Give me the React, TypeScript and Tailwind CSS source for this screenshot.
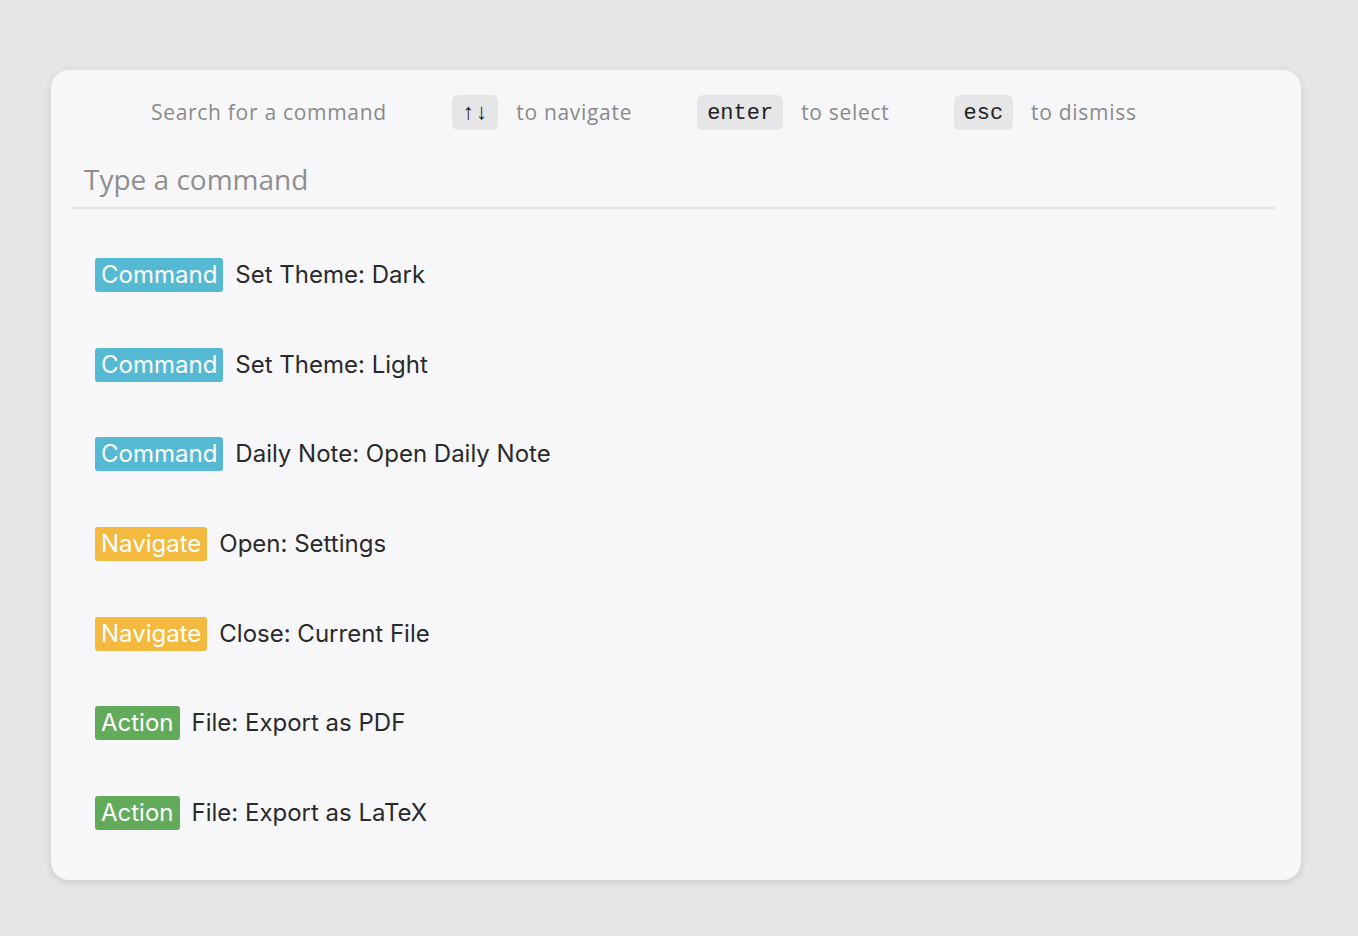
import React from "react";

type Kind = "Command" | "Navigate" | "Action";

const items: { kind: Kind; label: string }[] = [
  { kind: "Command", label: "Set Theme: Dark" },
  { kind: "Command", label: "Set Theme: Light" },
  { kind: "Command", label: "Daily Note: Open Daily Note" },
  { kind: "Navigate", label: "Open: Settings" },
  { kind: "Navigate", label: "Close: Current File" },
  { kind: "Action", label: "File: Export as PDF" },
  { kind: "Action", label: "File: Export as LaTeX" },
];

const badgeClass: Record<Kind, string> = {
  Command: "bg-[#56b9d3]",
  Navigate: "bg-[#f4b93f]",
  Action: "bg-[#62ab5b]",
};

const Kbd = ({ children }: { children: React.ReactNode }) => (
  <span className="inline-flex h-[35px] items-center rounded-md bg-[#e6e6e8] px-[10px] pt-[2px] text-[22px] tracking-normal text-[#222] [font-family:'Liberation_Mono',monospace]">
    {children}
  </span>
);

const App = () => {
  return (
    <div className="min-h-[936px] w-full bg-[#e5e5e5] pt-[70px] pl-[51px]">
      <div className="h-[810px] w-[1250px] rounded-[18px] bg-[#f7f7f9] shadow-[0_2px_6px_rgba(0,0,0,0.12)] pt-[24px] pl-[20px] pr-[26px]">
        <div className="flex h-[35px] items-center pl-[80px] pt-[2px] text-[21px] tracking-[0.7px] text-[#8a8a8a] [font-family:'Open_Sans',sans-serif]">
          <span>Search for a command</span>
          <span className="ml-[65px] flex items-center gap-[18px]">
            <Kbd>↑↓</Kbd>
            <span>to navigate</span>
          </span>
          <span className="ml-[65px] flex items-center gap-[18px]">
            <Kbd>enter</Kbd>
            <span>to select</span>
          </span>
          <span className="ml-[64px] flex items-center gap-[18px]">
            <Kbd>esc</Kbd>
            <span>to dismiss</span>
          </span>
        </div>
        <div className="mt-[30px] border-b-2 border-[#e3e3e5] pb-[8px] pl-[13px] text-[28px] leading-[40px] text-[#8e8e8e] [font-family:'Open_Sans',sans-serif]">
          Type a command
        </div>
        <ul className="mt-[24px] pl-[24px] [font-family:Inter,sans-serif]">
          {items.map((it) => (
            <li key={it.label} className="flex h-[89.7px] items-start gap-[12px] pt-[25px]">
              <span
                className={`${badgeClass[it.kind]} flex h-[34px] items-center rounded-[3px] px-[6px] text-[24px] text-white`}
              >
                {it.kind}
              </span>
              <span className="flex h-[34px] items-center text-[24px] text-[#2a2a2a]">{it.label}</span>
            </li>
          ))}
        </ul>
      </div>
    </div>
  );
};

export default App;
